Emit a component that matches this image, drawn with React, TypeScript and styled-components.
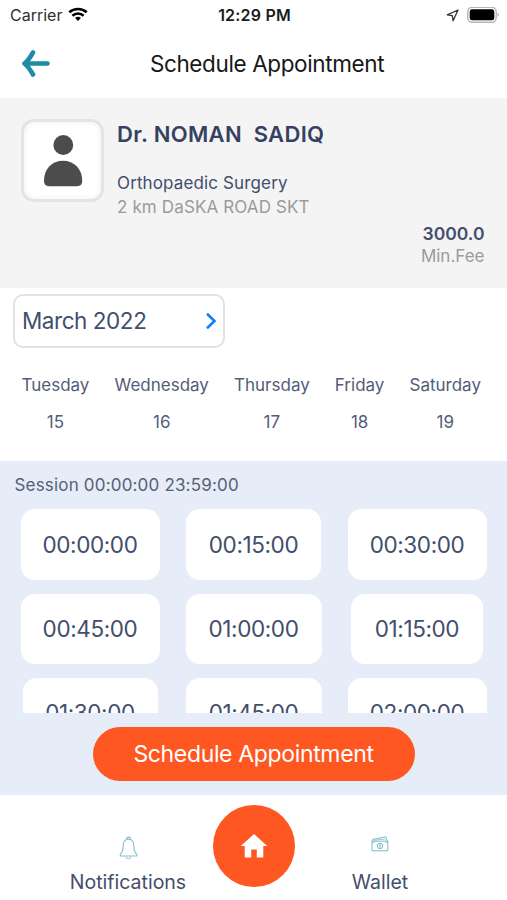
import React from 'react';
import styled, { createGlobalStyle } from 'styled-components';

const Global = createGlobalStyle`
  * { box-sizing: border-box; }
  body { margin: 0; background: #fff; font-family: Inter, "Liberation Sans", sans-serif; color: #424e6c; }
  button { font: inherit; border: 0; padding: 0; cursor: pointer; background: none; color: inherit; }
  svg { display: block; flex: none; }
`;

const Screen = styled.main`
  width: 507px;
  height: 900px;
  display: flex;
  flex-direction: column;
  overflow: hidden;
`;

const Label = styled.span<{ $size: number; $track?: number; $weight?: number; $color?: string; $line?: number }>`
  display: block;
  white-space: pre;
  font-size: ${p => p.$size}px;
  letter-spacing: ${p => p.$track ?? 0}px;
  font-weight: ${p => p.$weight ?? 400};
  color: ${p => p.$color ?? 'inherit'};
  line-height: ${p => p.$line ?? 24}px;
`;

const StatusBar = styled.div`
  height: 30px;
  flex: none;
  display: grid;
  grid-template-columns: 1fr auto 1fr;
  align-items: center;
  padding: 0 8px 0 10px;
`;

const StatusGroup = styled.div<{ $end?: boolean }>`
  display: flex;
  align-items: center;
  gap: ${p => (p.$end ? 8 : 6)}px;
  justify-content: ${p => (p.$end ? 'flex-end' : 'flex-start')};
`;

const Header = styled.header`
  height: 69px;
  flex: none;
  display: grid;
  grid-template-columns: 72px 1fr 45px;
  align-items: center;
  justify-items: center;
  padding-bottom: 1px;
  border-bottom: 1px solid #f1f1f1;
`;

const DoctorPanel = styled.section`
  height: 189px;
  flex: none;
  display: flex;
  align-items: flex-start;
  padding: 20px 22.5px 0 21px;
  background: #f4f4f4;
`;

const Avatar = styled.div`
  width: 83px;
  height: 83px;
  margin-right: 13px;
  display: flex;
  align-items: center;
  justify-content: center;
  background: #fff;
  border: 3px solid #e4e4e4;
  border-radius: 13px;
  box-shadow: inset 0 0 0 3px #f9f9f9;
`;

const DoctorInfo = styled.div`
  flex: 1;
  display: flex;
  flex-direction: column;
  padding-top: 3px;
`;

const Specialty = styled.div`
  margin-top: 25px;
`;

const Fee = styled.div`
  align-self: flex-end;
  display: flex;
  flex-direction: column;
  align-items: flex-end;
  margin-bottom: 21px;
`;

const Calendar = styled.section`
  height: 173px;
  flex: none;
  padding: 6px 13px;
`;

const MonthButton = styled.button`
  width: 212px;
  height: 54px;
  padding: 0 6px 0 7px;
  display: flex;
  align-items: center;
  justify-content: space-between;
  border: 2px solid #e2e2e2;
  border-radius: 10px;
`;

const Days = styled.div`
  display: flex;
  gap: 25.1px;
  padding: 25px 0 0 8.5px;
`;

const Day = styled.button`
  display: flex;
  flex-direction: column;
  align-items: center;
  gap: 13px;
`;

const Sessions = styled.section`
  height: 334px;
  flex: none;
  display: flex;
  flex-direction: column;
  align-items: center;
  background: #e6edf8;
`;

const SessionTitle = styled.div`
  align-self: flex-start;
  padding: 12px 0 0 14.5px;
`;

const Slots = styled.div`
  width: 490.5px;
  height: 204px;
  margin-top: 12.4px;
  flex: none;
  display: grid;
  grid-template-columns: repeat(3, 163.5px);
  grid-auto-rows: 70.5px;
  row-gap: 13.7px;
  justify-content: center;
  justify-items: center;
  overflow: hidden;
`;

const Slot = styled.button<{ $width: number }>`
  width: ${p => p.$width}px;
  display: flex;
  align-items: center;
  justify-content: center;
  background: #fff;
  border-radius: 14px;
`;

const Submit = styled.button`
  width: 322px;
  height: 54.5px;
  margin-top: 13.6px;
  display: flex;
  align-items: center;
  justify-content: center;
  border-radius: 28px;
  background: #ff5722;
`;

const TabBar = styled.nav`
  height: 105px;
  flex: none;
  display: grid;
  grid-template-columns: 126px 82px 126px;
  column-gap: 22px;
  padding-left: 65px;
`;

const Tab = styled.button`
  display: flex;
  flex-direction: column;
  align-items: center;
`;

const TabIcon = styled.span`
  height: 75px;
  padding-top: 40.5px;
`;

const HomeButton = styled.button`
  width: 82px;
  height: 82px;
  margin-top: 10px;
  display: flex;
  align-items: center;
  justify-content: center;
  border-radius: 50%;
  background: #ff5722;
`;

const WifiIcon = () => (
  <svg width="20" height="15.2" viewBox="0 0 21 16" fill="none" stroke="#000" strokeWidth="2.7">
    <path d="M1.3 5.6C6.4.9 14.6.9 19.7 5.6" />
    <path d="M4.6 9.2C8 6.1 13 6.1 16.4 9.2" />
    <path d="M7.4 11.5C9.2 9.9 11.8 9.9 13.6 11.5L10.5 14.7Z" fill="#000" stroke="none" />
  </svg>
);

const LocationIcon = () => (
  <svg width="13" height="13" viewBox="0 0 13 13" fill="none" stroke="#333" strokeWidth="1.3" strokeLinejoin="round">
    <path d="M12 1L1.2 5.8L6.3 6.6L7.1 11.8Z" />
  </svg>
);

const BatteryIcon = () => (
  <svg width="32" height="17" viewBox="0 0 32 17">
    <rect x=".8" y=".3" width="28.4" height="15" rx="4.5" fill="#fff" stroke="#b5b5b5" strokeWidth="1.4" />
    <rect x="2.7" y="2.3" width="24.6" height="11" rx="2.4" fill="#000" />
    <path d="M30.6 5.7Q31.8 6.3 31.8 7.7T30.6 9.7Z" fill="#aaa" />
  </svg>
);

const BackIcon = () => (
  <svg width="28" height="27" viewBox="0 0 28 27" fill="none" stroke="#218ba7" strokeWidth="4.6" strokeLinecap="round" strokeLinejoin="round">
    <path d="M11 2.5Q6.5 10.5 2.5 13.5Q6.5 16.5 11 24.5M3 13.5H25.5" />
  </svg>
);

const PersonIcon = () => (
  <svg width="40" height="52" viewBox="0 0 40 52" fill="#4c4b4d">
    <circle cx="20.3" cy="10" r="9.9" />
    <path d="M1 45.5C1 34 9 25.8 20 25.8S39.2 34 39.2 45.5C39.2 49.5 37.5 51.2 34 51.2H6.2C2.7 51.2 1 49.5 1 45.5Z" />
  </svg>
);

const ChevronIcon = () => (
  <svg width="12" height="18" viewBox="0 0 12 18" fill="none" stroke="#147cff" strokeWidth="2.6">
    <path d="M2 1.8L9.5 9L2 16.2" />
  </svg>
);

const BellIcon = () => (
  <svg width="19" height="24" viewBox="0 0 19 24" fill="none" stroke="#86c1d3" strokeWidth="1.1" strokeLinejoin="round">
    <path d="M7.6 3.3C7.3 .6 11.7 .6 11.4 3.3" strokeWidth="1.6" />
    <path d="M9.5 3.3C5.4 3.3 4.2 6.2 4.2 10.2C4.2 14 3.4 16 1.3 18.4V20H17.7V18.4C15.6 16 14.8 14 14.8 10.2C14.8 6.2 13.6 3.3 9.5 3.3Z" />
    <path d="M7 20.4C7.3 23.4 11.7 23.4 12 20.4" stroke="#b9ced5" />
  </svg>
);

const WalletIcon = () => (
  <svg width="18" height="16" viewBox="0 0 18 16" fill="none" stroke="#7dbacb" strokeWidth="1">
    <path d="M1 5.2H16.8V14.8H1Z" />
    <path d="M1 5.2L1.6 3.4L14.8 .8L16.4 5" />
    <path d="M3 4.2L14.2 3M3.4 5.2Q3.2 7 1 7.1M14.5 5.2Q14.6 7 16.8 7.1" strokeWidth=".8" />
    <circle cx="9" cy="10" r="2.7" />
    <path d="M10 8.8H8.5V10H9.7V11.2H8" strokeWidth=".7" />
  </svg>
);

const HomeIcon = () => (
  <svg width="28" height="24" viewBox="0 0 28 24" fill="#fff">
    <path d="M14 0L27.2 12H23.3V23.5H16.8V15.5H11.2V23.5H4.7V12H.8Z" />
  </svg>
);

const days = [
  { name: 'Tuesday', date: '15' },
  { name: 'Wednesday', date: '16' },
  { name: 'Thursday', date: '17' },
  { name: 'Friday', date: '18' },
  { name: 'Saturday', date: '19' },
];

const slots = [
  { time: '00:00:00', width: 139 },
  { time: '00:15:00', width: 135.5 },
  { time: '00:30:00', width: 139 },
  { time: '00:45:00', width: 139 },
  { time: '01:00:00', width: 136 },
  { time: '01:15:00', width: 131.5 },
  { time: '01:30:00', width: 135 },
  { time: '01:45:00', width: 136 },
  { time: '02:00:00', width: 139 },
];

export default function App() {
  return (
    <>
      <Global />
      <Screen>
        <StatusBar>
          <StatusGroup>
            <Label $size={16} $color="#303030">Carrier</Label>
            <WifiIcon />
          </StatusGroup>
          <Label $size={16} $track={0.2} $weight={600} $color="#1c1c1c">12:29 PM</Label>
          <StatusGroup $end>
            <LocationIcon />
            <BatteryIcon />
          </StatusGroup>
        </StatusBar>
        <Header>
          <button aria-label="Back"><BackIcon /></button>
          <Label $size={22.5} $track={-0.38} $color="#171717">Schedule Appointment</Label>
        </Header>
        <DoctorPanel>
          <Avatar><PersonIcon /></Avatar>
          <DoctorInfo>
            <Label $size={22} $track={0.33} $weight={600} $color="#36415f">Dr. NOMAN  SADIQ</Label>
            <Specialty>
              <Label $size={17} $track={0.13}>Orthopaedic Surgery</Label>
              <Label $size={17} $track={0.13} $color="#9b9b9b">2 km DaSKA ROAD SKT</Label>
            </Specialty>
          </DoctorInfo>
          <Fee>
            <Label $size={17.5} $weight={600} $line={22}>3000.0</Label>
            <Label $size={17} $color="#9b9b9b" $line={22}>Min.Fee</Label>
          </Fee>
        </DoctorPanel>
        <Calendar>
          <MonthButton>
            <Label $size={22.5} $track={-0.45}>March 2022</Label>
            <ChevronIcon />
          </MonthButton>
          <Days>
            {days.map(day => (
              <Day key={day.date}>
                <Label $size={17} $color="#535d79">{day.name}</Label>
                <Label $size={17} $color="#535d79">{day.date}</Label>
              </Day>
            ))}
          </Days>
        </Calendar>
        <Sessions>
          <SessionTitle>
            <Label $size={17} $track={0.18} $color="#566174">Session 00:00:00 23:59:00</Label>
          </SessionTitle>
          <Slots>
            {slots.map(slot => (
              <Slot key={slot.time} $width={slot.width}>
                <Label $size={22.5} $track={-0.4}>{slot.time}</Label>
              </Slot>
            ))}
          </Slots>
          <Submit><Label $size={23} $track={-0.35} $color="#fff">Schedule Appointment</Label></Submit>
        </Sessions>
        <TabBar>
          <Tab>
            <TabIcon><BellIcon /></TabIcon>
            <Label $size={19.5}>Notifications</Label>
          </Tab>
          <HomeButton aria-label="Home"><HomeIcon /></HomeButton>
          <Tab>
            <TabIcon><WalletIcon /></TabIcon>
            <Label $size={19.5}>Wallet</Label>
          </Tab>
        </TabBar>
      </Screen>
    </>
  );
}
